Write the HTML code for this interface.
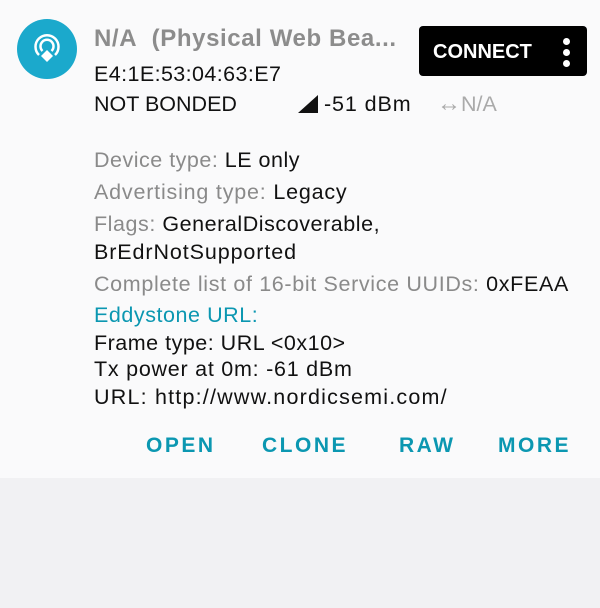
<!DOCTYPE html>
<html><head><style>
body{margin:0;width:600px;height:608px;background:#f1f1f3;font-family:"Liberation Sans",sans-serif;overflow:hidden;position:relative}
.card{position:absolute;left:0;top:0;width:600px;height:478px;background:#fafafb}
.t{position:absolute;white-space:nowrap;font-size:21.5px;color:#111;line-height:24px}
.g{color:#8a8a8a}
.b{color:#0b97b1}
.btn{position:absolute;top:434px;font-size:21px;color:#0b97b1;letter-spacing:2.5px;font-weight:bold;line-height:24px}
</style></head><body>
<div class="card"></div>
<svg style="position:absolute;left:16px;top:18px" width="62" height="62" viewBox="0 0 62 62">
<circle cx="31" cy="31" r="30" fill="#1ba9cc"/>
<path d="M23 37 A11.5 11.5 0 1 1 39 37" fill="none" stroke="#fff" stroke-width="2.5"/>
<path d="M26.5 33 A6.5 6.5 0 1 1 35.5 33" fill="none" stroke="#fff" stroke-width="2.5"/>
<path d="M31 32 L37 38 L31 44 L25 38 Z" fill="#fff"/>
</svg>
<div class="t g" style="left:94px;top:27px;font-size:24px;font-weight:bold;color:#8c8c8c;letter-spacing:0.6px">N/A&nbsp; (Physical Web Bea...</div>
<div style="position:absolute;left:419px;top:26px;width:168px;height:50px;background:#000;border-radius:4px"></div>
<div class="t" style="left:433px;top:40px;color:#fff;font-weight:bold;font-size:20px">CONNECT</div>
<div style="position:absolute;left:563px;top:38px;width:7px;height:7px;border-radius:50%;background:#fff"></div>
<div style="position:absolute;left:563px;top:49px;width:7px;height:7px;border-radius:50%;background:#fff"></div>
<div style="position:absolute;left:563px;top:60px;width:7px;height:7px;border-radius:50%;background:#fff"></div>
<div class="t" style="left:94px;top:62px;letter-spacing:0.4px">E4:1E:53:04:63:E7</div>
<div class="t" style="left:94px;top:92px">NOT BONDED</div>
<svg style="position:absolute;left:298px;top:94px" width="22" height="20"><path d="M0 19 L20 1 L20 19 Z" fill="#111"/></svg>
<div class="t" style="left:324px;top:92px;letter-spacing:0.9px">-51 dBm</div>
<div class="t" style="left:437px;top:92px;color:#aaa"><span style="font-size:24px">↔</span>N/A</div>
<div class="t" style="left:94px;top:148px;letter-spacing:0.5px"><span class="g">Device type: </span>LE only</div>
<div class="t" style="left:94px;top:180px;letter-spacing:0.8px"><span class="g">Advertising type: </span>Legacy</div>
<div class="t" style="left:94px;top:212px;letter-spacing:0.55px"><span class="g">Flags: </span>GeneralDiscoverable,</div>
<div class="t" style="left:94px;top:240px;letter-spacing:0.9px">BrEdrNotSupported</div>
<div class="t" style="left:94px;top:272px;letter-spacing:0.65px"><span class="g">Complete list of 16-bit Service UUIDs: </span>0xFEAA</div>
<div class="t b" style="left:94px;top:303px;letter-spacing:0.55px">Eddystone URL:</div>
<div class="t" style="left:94px;top:331px;letter-spacing:0.5px">Frame type: URL &lt;0x10&gt;</div>
<div class="t" style="left:94px;top:357px;letter-spacing:0.75px">Tx power at 0m: -61 dBm</div>
<div class="t" style="left:94px;top:385px;letter-spacing:1.2px">URL: http://www.nordicsemi.com/</div>
<div class="btn" style="left:146px">OPEN</div>
<div class="btn" style="left:262px">CLONE</div>
<div class="btn" style="left:399px">RAW</div>
<div class="btn" style="left:498px">MORE</div>
</body></html>
